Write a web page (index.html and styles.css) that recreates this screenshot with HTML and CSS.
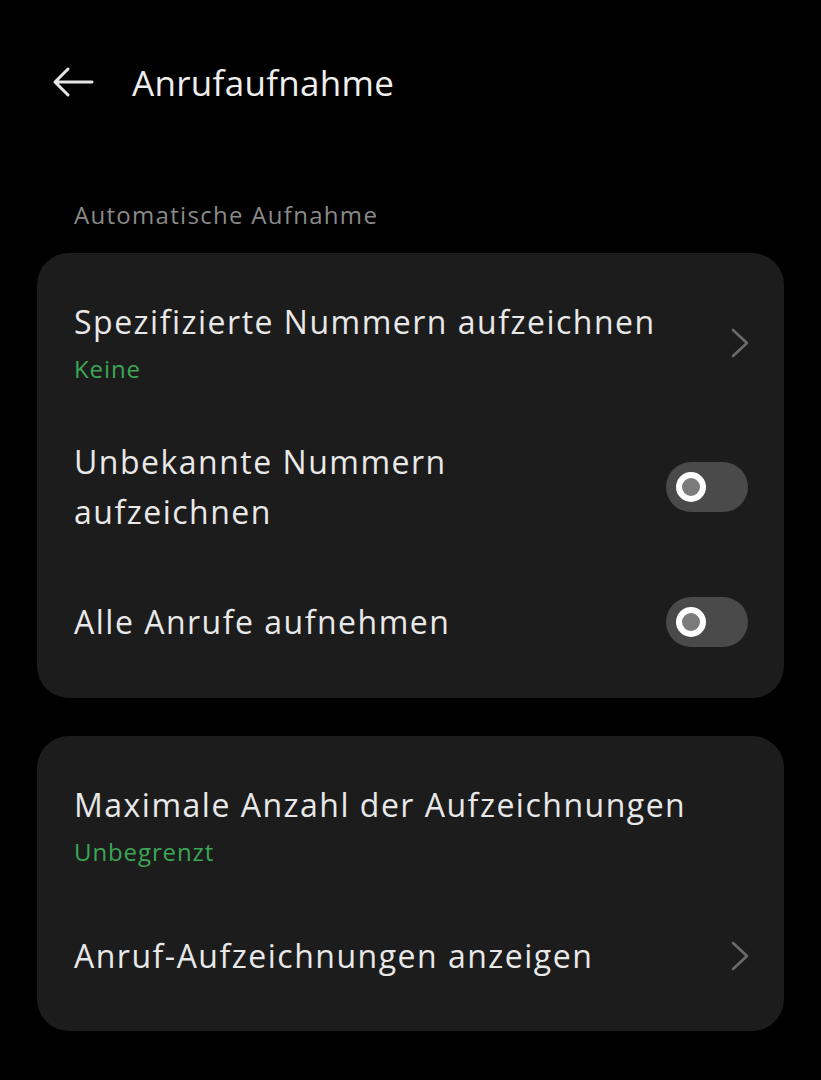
FILE: index.html
```html
<!DOCTYPE html>
<html lang="de">
<head>
    <meta charset="UTF-8">
    <meta name="viewport" content="width=device-width, initial-scale=1.0">
    <title>Anrufaufnahme</title>
    <link rel="stylesheet" href="styles.css">
</head>
<body>

<div class="header">
    <svg class="back" width="42" height="32" viewBox="0 0 42 32">
        <path d="M3 16 H40 M16 3 L3 16 L16 29" fill="none" stroke="#e6e6e6" stroke-width="3" stroke-linecap="round" stroke-linejoin="round"/>
    </svg>
    <h1 class="title">Anrufaufnahme</h1>
</div>

<div class="section-label">Automatische Aufnahme</div>

<div class="card">
    <div class="row">
        <div class="text">
            <div class="row-title">Spezifizierte Nummern aufzeichnen</div>
            <div class="row-sub">Keine</div>
        </div>
        <svg class="chevron" width="20" height="32" viewBox="0 0 20 32">
            <polyline points="3,3 17,16 3,29" fill="none" stroke="#6a6a6a" stroke-width="2.6" stroke-linecap="round" stroke-linejoin="round"/>
        </svg>
    </div>
    <div class="row">
        <div class="text">
            <div class="row-title">Unbekannte Nummern<br>aufzeichnen</div>
        </div>
        <div class="switch"><span class="knob"></span></div>
    </div>
    <div class="row">
        <div class="text">
            <div class="row-title">Alle Anrufe aufnehmen</div>
        </div>
        <div class="switch"><span class="knob"></span></div>
    </div>
</div>

<div class="card">
    <div class="row">
        <div class="text">
            <div class="row-title">Maximale Anzahl der Aufzeichnungen</div>
            <div class="row-sub">Unbegrenzt</div>
        </div>
    </div>
    <div class="row">
        <div class="text">
            <div class="row-title">Anruf-Aufzeichnungen anzeigen</div>
        </div>
        <svg class="chevron" width="20" height="32" viewBox="0 0 20 32">
            <polyline points="3,3 17,16 3,29" fill="none" stroke="#6a6a6a" stroke-width="2.6" stroke-linecap="round" stroke-linejoin="round"/>
        </svg>
    </div>
</div>

</body>
</html>
```

FILE: styles.css
```css
body {
    margin: 0;
    background-color: #000;
    color: #e8e8e8;
    font-family: "Open Sans", sans-serif;
}
.header {
    display: flex;
    align-items: center;
    gap: 38px;
    height: 164px;
    padding-left: 52px;
}
.back {
    display: block;
}
.title {
    margin: 0;
    font-size: 35px;
    font-weight: 400;
    letter-spacing: 0.3px;
    color: #eeeeee;
}
.section-label {
    padding-left: 74px;
    font-size: 24px;
    line-height: 40px;
    height: 40px;
    margin-top: 31px;
    margin-bottom: 18px;
    letter-spacing: 1.3px;
    color: #8a8a8a;
}
.card {
    margin: 0 37px 38px;
    padding: 20px 0 15px;
    background-color: #1c1c1c;
    border-radius: 32px;
}
.row {
    display: flex;
    align-items: center;
    justify-content: space-between;
    min-height: 122px;
    padding: 24px 36px 24px 37px;
    box-sizing: border-box;
}
.card + .card .row:last-child {
    min-height: 120px;
}
.row-title {
    font-size: 32px;
    line-height: 50px;
    letter-spacing: 1.5px;
}
.row-sub {
    margin-top: 2px;
    font-size: 24px;
    line-height: 40px;
    letter-spacing: 0.9px;
    color: #3ba655;
}
.chevron {
    display: block;
    margin-right: -2px;
}
.switch {
    display: flex;
    align-items: center;
    width: 82px;
    height: 50px;
    padding-left: 10px;
    box-sizing: border-box;
    border-radius: 25px;
    background-color: #4a4a4a;
}
.knob {
    width: 30px;
    height: 30px;
    box-sizing: border-box;
    border: 6px solid #ffffff;
    border-radius: 50%;
    background-color: #7b7b7b;
}
```
